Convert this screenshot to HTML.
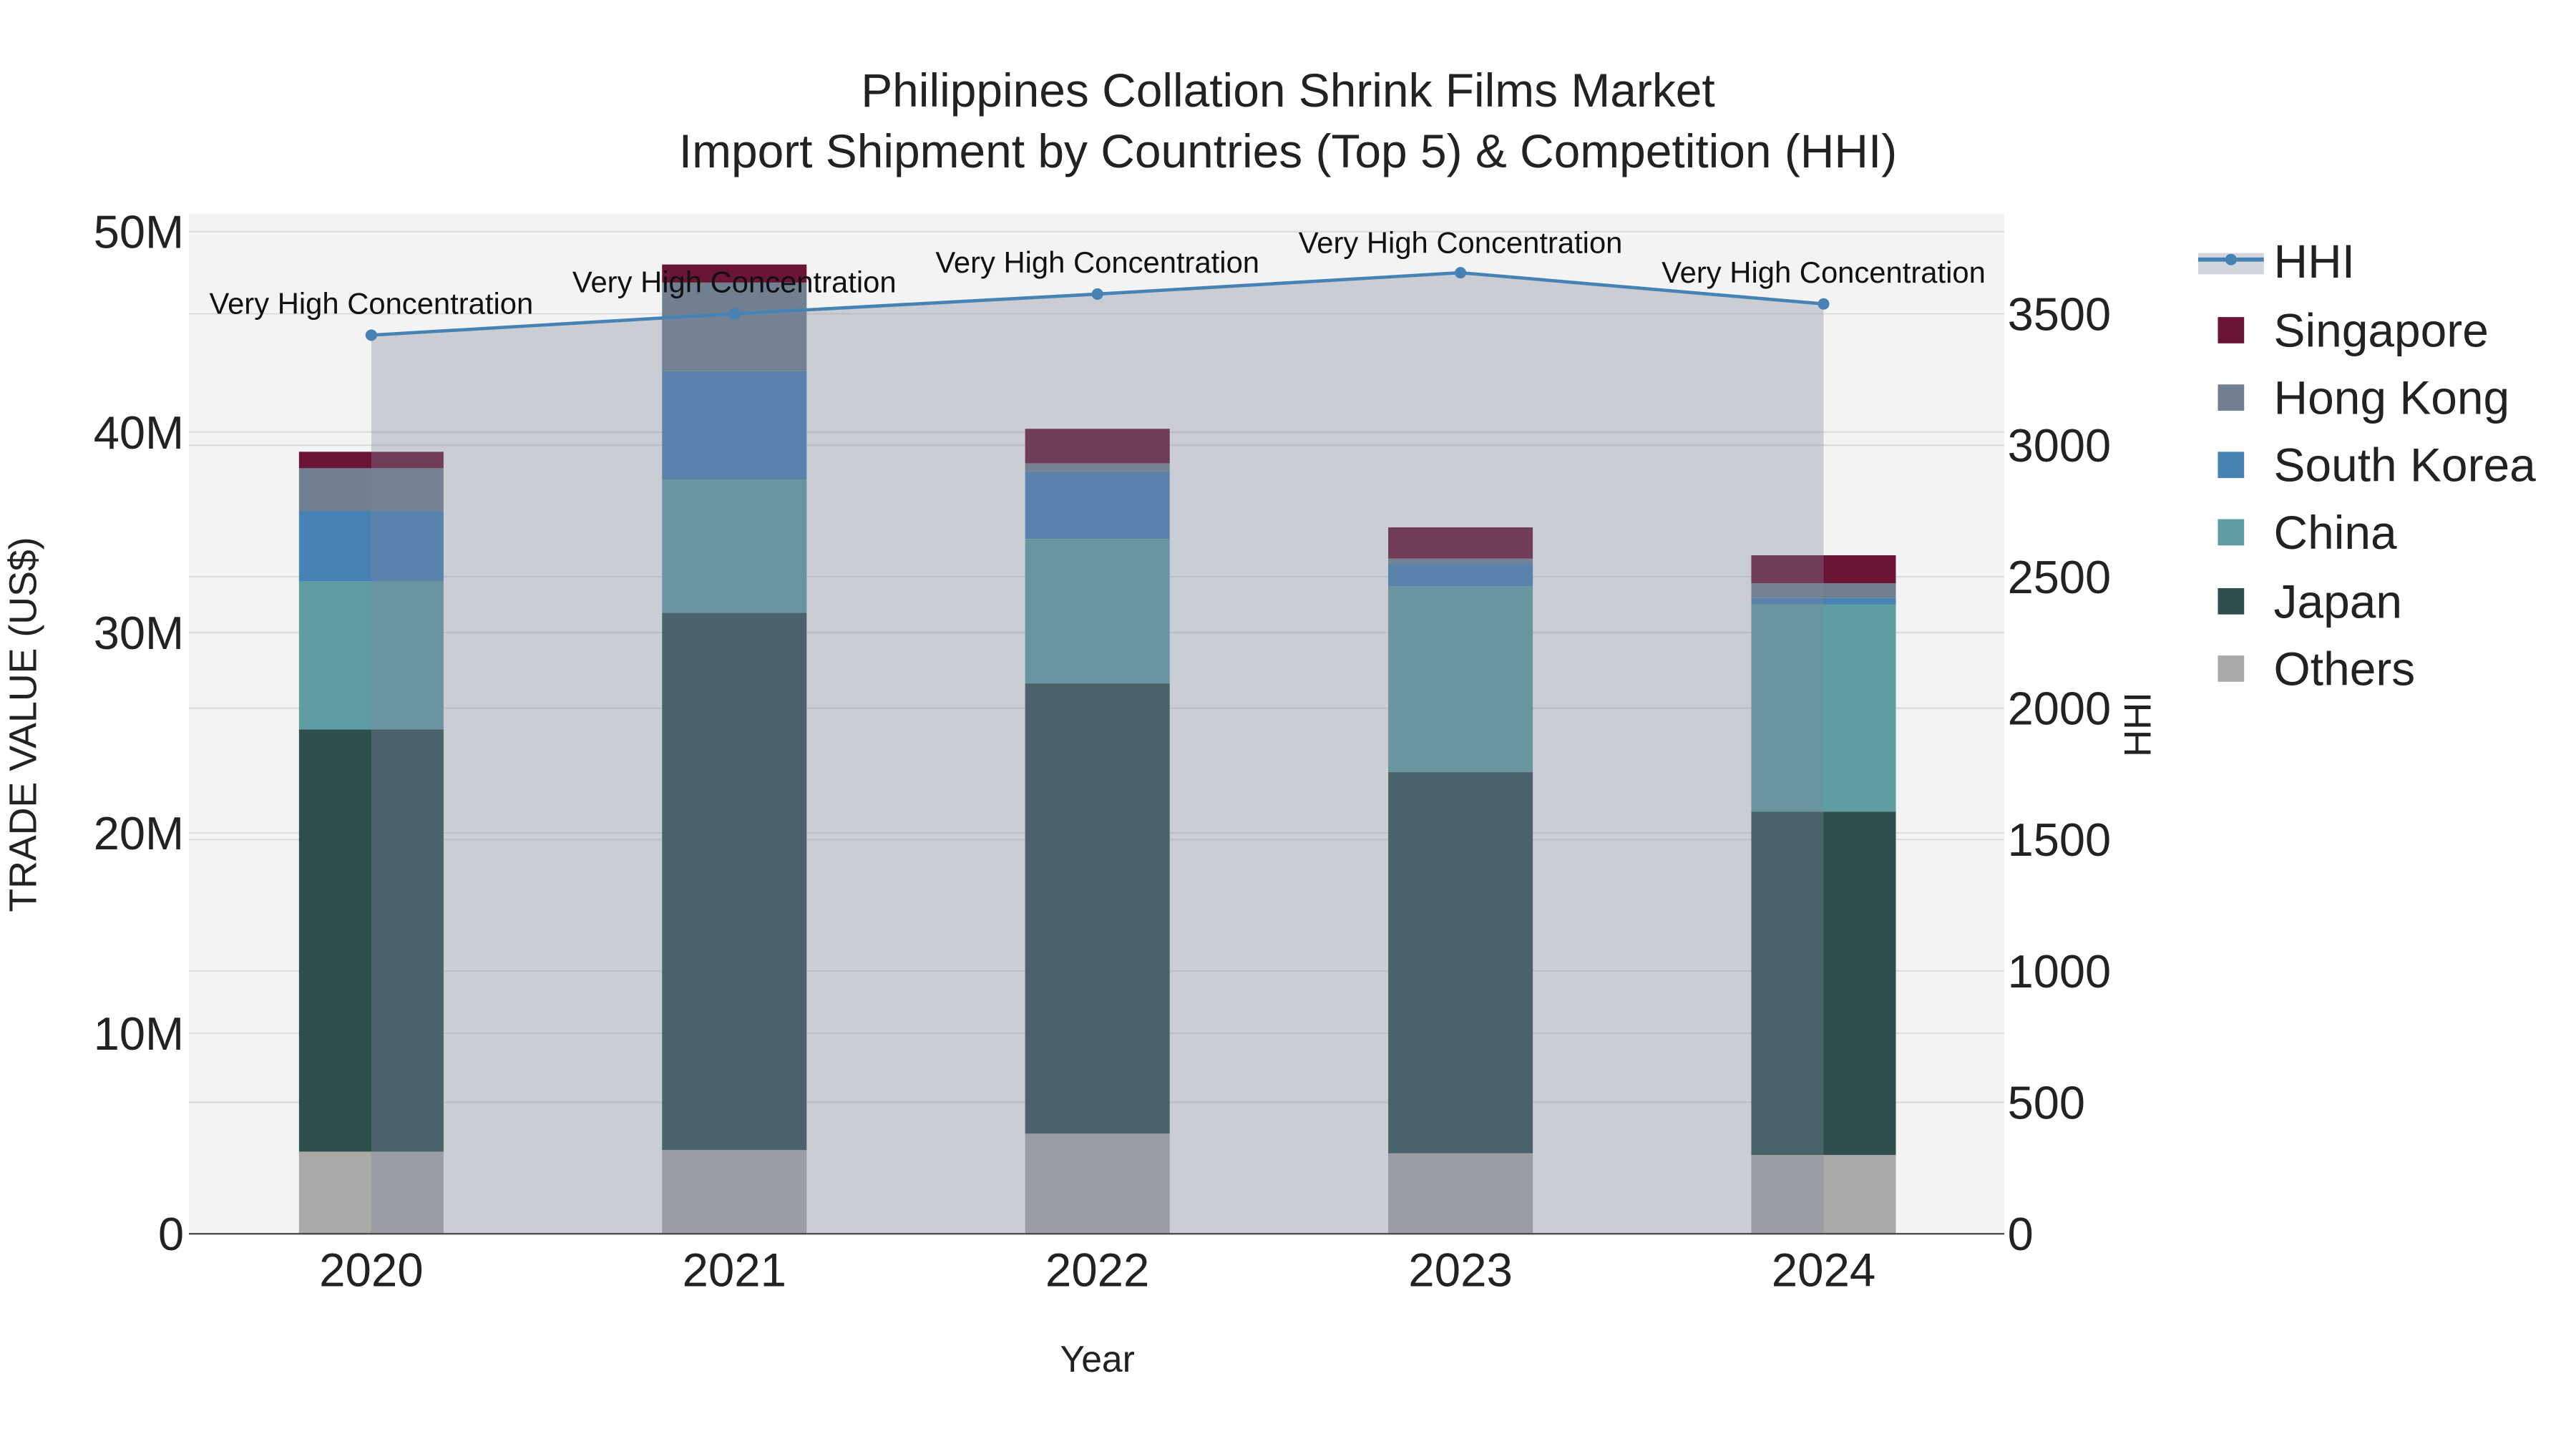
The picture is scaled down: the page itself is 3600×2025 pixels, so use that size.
<!DOCTYPE html>
<html><head><meta charset="utf-8"><style>
html,body{margin:0;padding:0;background:#fff;}
svg{display:block;}
text{font-family:"Liberation Sans",Arial,sans-serif;}
</style></head><body>
<svg width="3600" height="2025" viewBox="0 0 1568 882" xmlns="http://www.w3.org/2000/svg">
<rect x="0" y="0" width="1568" height="882" fill="#fff"/>
<rect x="115" y="130" width="1105" height="621" fill="#f3f3f3"/>
<g stroke="#dedede" stroke-width="1">
<line x1="115" x2="1220" y1="141" y2="141"/><line x1="115" x2="1220" y1="263" y2="263"/>
<line x1="115" x2="1220" y1="385" y2="385"/><line x1="115" x2="1220" y1="507" y2="507"/>
<line x1="115" x2="1220" y1="629" y2="629"/>
<line x1="115" x2="1220" y1="671" y2="671"/><line x1="115" x2="1220" y1="591" y2="591"/>
<line x1="115" x2="1220" y1="511" y2="511"/><line x1="115" x2="1220" y1="431" y2="431"/>
<line x1="115" x2="1220" y1="351" y2="351"/><line x1="115" x2="1220" y1="271" y2="271"/>
<line x1="115" x2="1220" y1="191" y2="191"/>
</g>
<g>
<rect x="182" y="701" width="88" height="50" fill="#a9a9a9"/>
<rect x="182" y="444" width="88" height="257" fill="#2f4f4f"/>
<rect x="182" y="354" width="88" height="90" fill="#5f9ea0"/>
<rect x="182" y="311" width="88" height="43" fill="#4682b4"/>
<rect x="182" y="285" width="88" height="26" fill="#708090"/>
<rect x="182" y="275" width="88" height="10" fill="#6b1536"/>

<rect x="403" y="700" width="88" height="51" fill="#a9a9a9"/>
<rect x="403" y="373" width="88" height="327" fill="#2f4f4f"/>
<rect x="403" y="292" width="88" height="81" fill="#5f9ea0"/>
<rect x="403" y="226" width="88" height="66" fill="#4682b4"/>
<rect x="403" y="172" width="88" height="54" fill="#708090"/>
<rect x="403" y="161" width="88" height="11" fill="#6b1536"/>

<rect x="624" y="690" width="88" height="61" fill="#a9a9a9"/>
<rect x="624" y="416" width="88" height="274" fill="#2f4f4f"/>
<rect x="624" y="328" width="88" height="88" fill="#5f9ea0"/>
<rect x="624" y="287" width="88" height="41" fill="#4682b4"/>
<rect x="624" y="282" width="88" height="5" fill="#708090"/>
<rect x="624" y="261" width="88" height="21" fill="#6b1536"/>

<rect x="845" y="702" width="88" height="49" fill="#a9a9a9"/>
<rect x="845" y="470" width="88" height="232" fill="#2f4f4f"/>
<rect x="845" y="357" width="88" height="113" fill="#5f9ea0"/>
<rect x="845" y="343" width="88" height="14" fill="#4682b4"/>
<rect x="845" y="340" width="88" height="3" fill="#708090"/>
<rect x="845" y="321" width="88" height="19" fill="#6b1536"/>

<rect x="1066" y="703" width="88" height="48" fill="#a9a9a9"/>
<rect x="1066" y="494" width="88" height="209" fill="#2f4f4f"/>
<rect x="1066" y="368" width="88" height="126" fill="#5f9ea0"/>
<rect x="1066" y="364" width="88" height="4" fill="#4682b4"/>
<rect x="1066" y="355" width="88" height="9" fill="#708090"/>
<rect x="1066" y="338" width="88" height="17" fill="#6b1536"/>
</g>
<polygon points="226,751 226,204 447,191 668,179 889,166 1110,185 1110,751" fill="rgba(125,136,156,0.35)"/>
<polyline points="226,204 447,191 668,179 889,166 1110,185" fill="none" stroke="#4682b4" stroke-width="2"/>
<g fill="#4682b4"><circle cx="226" cy="204" r="3.5"/><circle cx="447" cy="191" r="3.5"/><circle cx="668" cy="179" r="3.5"/><circle cx="889" cy="166" r="3.5"/><circle cx="1110" cy="185" r="3.5"/></g>
<line x1="115" x2="1220" y1="751" y2="751" stroke="#444" stroke-width="1"/>
<g font-size="18.2" fill="#111" text-anchor="middle">
<text x="226" y="191">Very High Concentration</text>
<text x="447" y="178">Very High Concentration</text>
<text x="668" y="166">Very High Concentration</text>
<text x="889" y="154">Very High Concentration</text>
<text x="1110" y="172">Very High Concentration</text>
</g>
<g font-size="28.7" fill="#222" text-anchor="middle">
<text x="784" y="65">Philippines Collation Shrink Films Market</text>
<text x="784" y="102">Import Shipment by Countries (Top 5) &amp; Competition (HHI)</text>
</g>
<g font-size="28.3" fill="#222" text-anchor="end">
<text x="112" y="151">50M</text><text x="112" y="273">40M</text><text x="112" y="395">30M</text>
<text x="112" y="517">20M</text><text x="112" y="639">10M</text><text x="112" y="761">0</text>
</g>
<g font-size="28.3" fill="#222" text-anchor="start">
<text x="1222" y="201">3500</text><text x="1222" y="281">3000</text><text x="1222" y="361">2500</text>
<text x="1222" y="441">2000</text><text x="1222" y="521">1500</text><text x="1222" y="601">1000</text>
<text x="1222" y="681">500</text><text x="1222" y="761">0</text>
</g>
<g font-size="28.5" fill="#222" text-anchor="middle">
<text x="226" y="783">2020</text><text x="447" y="783">2021</text><text x="668" y="783">2022</text>
<text x="889" y="783">2023</text><text x="1110" y="783">2024</text>
</g>
<text x="668" y="835" font-size="22.5" fill="#222" text-anchor="middle">Year</text>
<text transform="translate(22,441) rotate(-90)" font-size="23.4" fill="#222" text-anchor="middle">TRADE VALUE (US$)</text>
<text transform="translate(1309,441) rotate(-90)" font-size="23" fill="#222" text-anchor="middle">HHI</text>
<rect x="1338" y="154" width="40" height="13" fill="rgba(125,136,156,0.35)"/>
<line x1="1338" x2="1378" y1="158" y2="158" stroke="#4682b4" stroke-width="2.5"/>
<circle cx="1358" cy="158" r="3.5" fill="#4682b4"/>
<g font-size="28.7" fill="#222">
<text x="1384" y="169">HHI</text>
<text x="1384" y="211">Singapore</text>
<text x="1384" y="252">Hong Kong</text>
<text x="1384" y="293">South Korea</text>
<text x="1384" y="334">China</text>
<text x="1384" y="376">Japan</text>
<text x="1384" y="417">Others</text>
</g>
<rect x="1350" y="193" width="16" height="16" fill="#6b1536"/>
<rect x="1350" y="234" width="16" height="16" fill="#708090"/>
<rect x="1350" y="275" width="16" height="16" fill="#4682b4"/>
<rect x="1350" y="316" width="16" height="16" fill="#5f9ea0"/>
<rect x="1350" y="358" width="16" height="16" fill="#2f4f4f"/>
<rect x="1350" y="399" width="16" height="16" fill="#a9a9a9"/>
</svg>
</body></html>
